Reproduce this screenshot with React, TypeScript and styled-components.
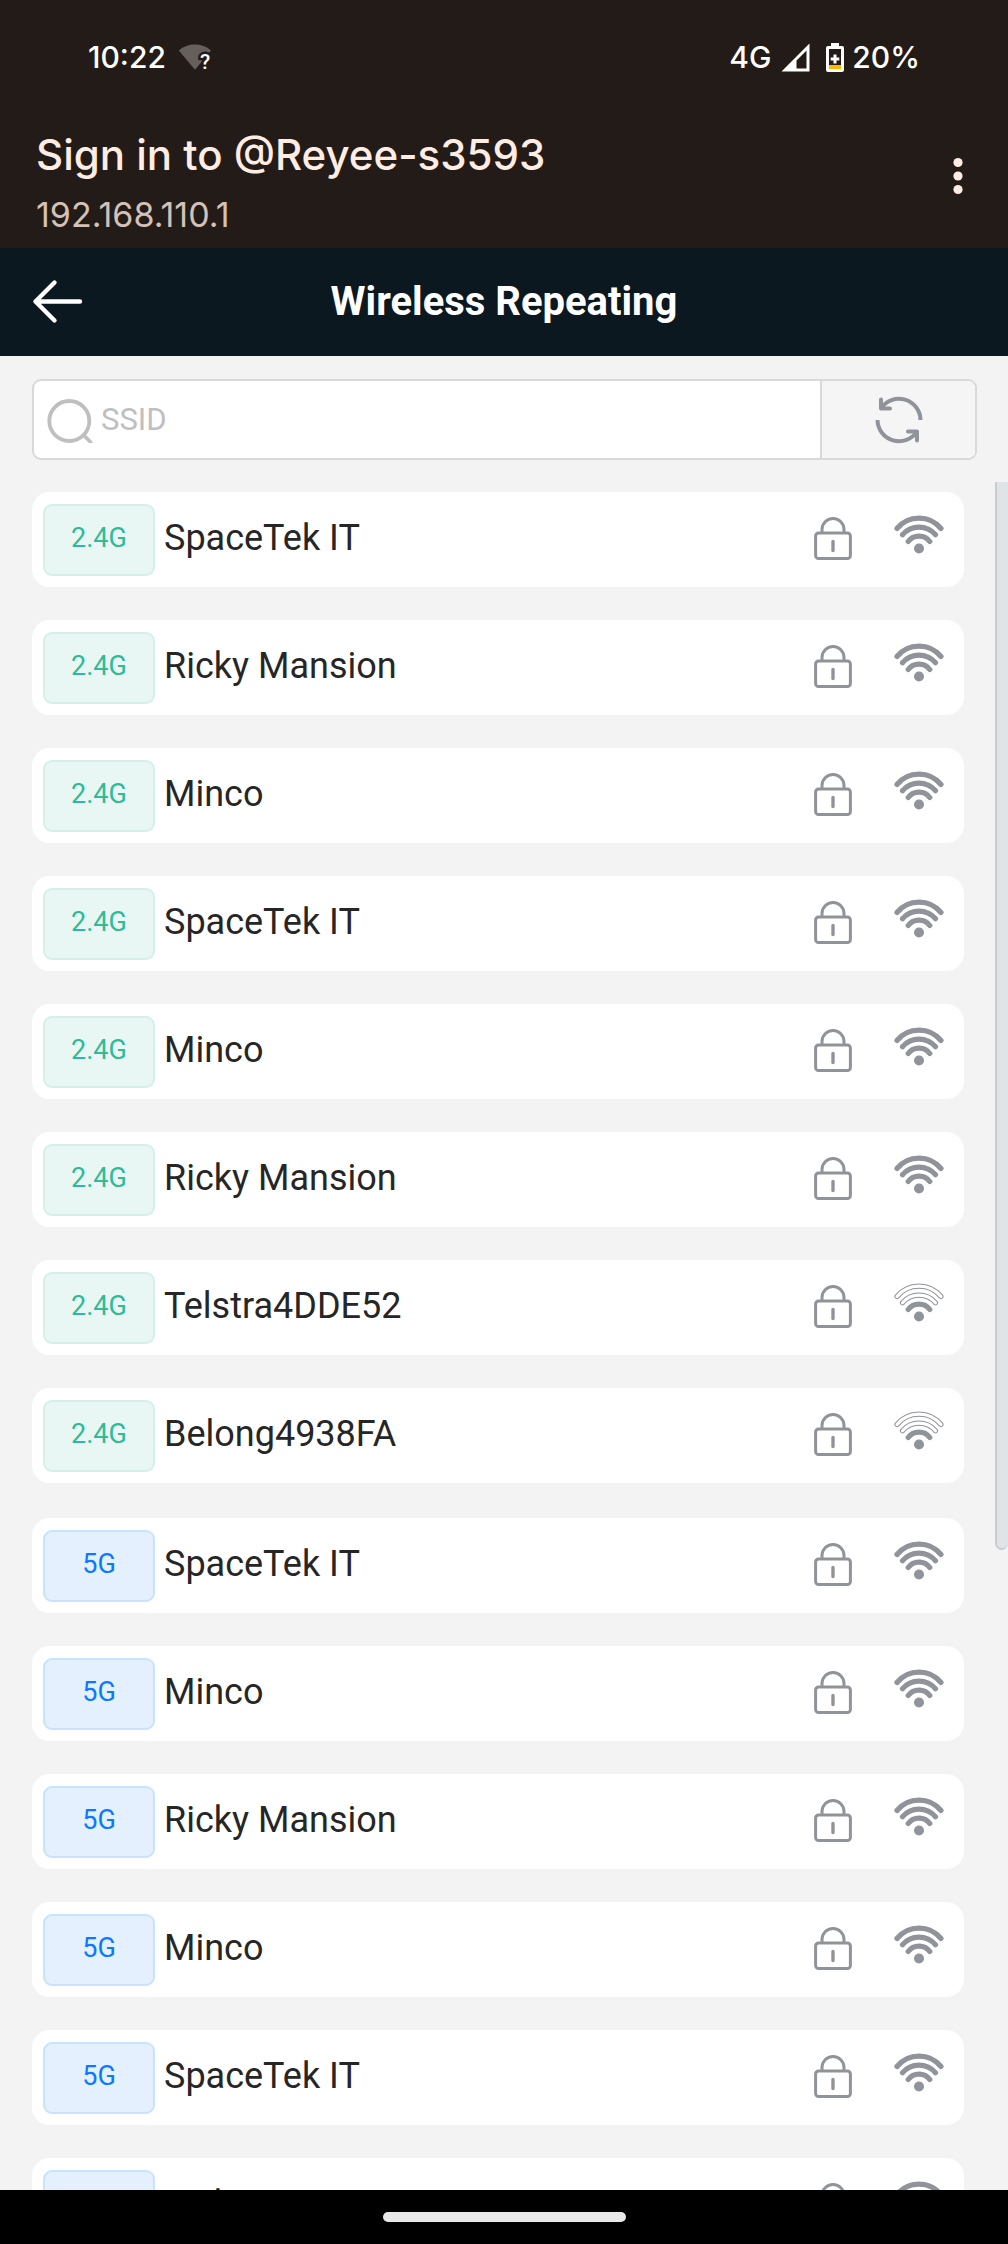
import React, { useState } from "react";
import styled, { createGlobalStyle } from "styled-components";

const GlobalStyle = createGlobalStyle`
  *, *::before, *::after { box-sizing: border-box; }
  body { margin: 0; background: #f3f3f3; }
`;

const systemFont = `Inter, "Open Sans", sans-serif`;
const pageFont = `Roboto, "Liberation Sans", sans-serif`;
const iconGrey = "#90939a";

const Screen = styled.div`
  display: flex;
  flex-direction: column;
  height: 100vh;
  background: #f3f3f3;
  font-family: ${pageFont};
`;

const StatusBar = styled.div`
  display: flex;
  flex: none;
  align-items: center;
  justify-content: space-between;
  height: 114px;
  padding: 0 88px;
  background: #231b17;
  color: #fff;
  font-family: ${systemFont};
  font-size: 30px;
  font-weight: 500;
  line-height: 40px;
`;

const StatusGroup = styled.div<{ $gap: number }>`
  display: flex;
  align-items: center;
  gap: ${(p) => p.$gap}px;
`;

const PortalBar = styled.header`
  display: flex;
  flex: none;
  align-items: flex-start;
  justify-content: space-between;
  height: 134px;
  padding: 11px 32px 0 36px;
  background: #231b17;
  font-family: ${systemFont};
`;

const PortalTitle = styled.div`
  color: #ffede4;
  font-size: 42px;
  font-weight: 500;
  line-height: 60px;
`;

const PortalAddress = styled.div`
  color: #d4c1b7;
  font-size: 34px;
  line-height: 60px;
`;

const IconButton = styled.button`
  display: flex;
  align-items: center;
  justify-content: center;
  padding: 0;
  border: 0;
  background: transparent;
  cursor: pointer;
`;

const MoreButton = styled(IconButton)`
  height: 102px;
`;

const NavBar = styled.div`
  display: grid;
  flex: none;
  grid-template-columns: 52px 1fr 52px;
  align-items: center;
  height: 108px;
  padding: 0 32px;
  background: #0b1820;
`;

const NavTitle = styled.h1`
  margin: 0;
  color: #fff;
  font-size: 40px;
  font-weight: 700;
  line-height: 48px;
  text-align: center;
`;

const SearchForm = styled.form`
  display: flex;
  flex: none;
  height: 81px;
  margin: 23px 31px 22px 32px;
  border: 2px solid #d9d9d9;
  border-radius: 9px;
  background: #fff;
  overflow: hidden;
`;

const SearchField = styled.label`
  display: flex;
  flex: 1;
  align-items: center;
  gap: 8px;
  min-width: 0;
  padding-left: 13px;
`;

const SearchInput = styled.input`
  flex: 1;
  min-width: 0;
  height: 100%;
  padding: 0;
  border: 0;
  outline: 0;
  background: transparent;
  color: #262626;
  font-family: ${pageFont};
  font-size: 31px;

  &::placeholder { color: #bfbfbf; opacity: 1; }
`;

const RefreshButton = styled(IconButton)`
  flex: none;
  width: 155px;
  border-left: 2px solid #d9d9d9;
  background: #f5f5f5;
`;

const ListArea = styled.main`
  display: flex;
  flex: 1;
  min-height: 0;
`;

const NetworkScroller = styled.div`
  display: flex;
  flex: 1;
  flex-direction: column;
  gap: 35px;
  min-width: 0;
  padding: 10px 31px 0 32px;
  overflow-y: auto;
  scrollbar-width: none;
`;

const NetworkList = styled.ul`
  display: flex;
  flex: none;
  flex-direction: column;
  gap: 33px;
  margin: 0;
  padding: 0;
  list-style: none;
`;

const NetworkRow = styled.button`
  display: flex;
  align-items: center;
  width: 100%;
  height: 95px;
  padding: 0 20px 0 11px;
  border: 0;
  border-radius: 18px;
  background: #fff;
  color: #262626;
  font-family: ${pageFont};
  text-align: left;
  cursor: pointer;
`;

const Band = styled.span<{ $fast: boolean }>`
  flex: none;
  width: 112px;
  height: 72px;
  border: 2px solid ${(p) => (p.$fast ? "#c9e2fd" : "#d4f0e8")};
  border-radius: 9px;
  background: ${(p) => (p.$fast ? "#e4f0fd" : "#e8f7f4")};
  color: ${(p) => (p.$fast ? "#0a7aff" : "#2fba98")};
  font-size: 27px;
  line-height: 64px;
  text-align: center;
`;

const NetworkName = styled.span`
  flex: 1;
  min-width: 0;
  padding: 0 9px 4px;
  overflow: hidden;
  font-size: 36px;
  line-height: 48px;
  text-overflow: ellipsis;
  white-space: nowrap;
`;

const RowIcons = styled.span`
  display: flex;
  flex: none;
  gap: 42px;
  padding-bottom: 4px;
`;

const ScrollTrack = styled.div`
  flex: none;
  width: 13px;
`;

const ScrollThumb = styled.div`
  height: 62.5%;
  border: 2px solid #c9cdd0;
  border-width: 0 0 2px 2px;
  border-radius: 0 0 7px 7px;
  background: #e0e4e8;
`;

const GestureBar = styled.footer`
  display: flex;
  flex: none;
  justify-content: center;
  height: 54px;
  padding-top: 22px;
  background: #000;
`;

const GestureHandle = styled.div`
  width: 243px;
  height: 10px;
  border-radius: 5px;
  background: #e9e9e9;
`;

const WifiUnknownIcon = () => (
  <svg width="40" height="28" viewBox="0 0 40 28" overflow="visible" aria-hidden="true">
    <path d="M.8 7.4A25 25 0 0 1 33 7.4L17 26.8Z" fill="#66605d" />
    <text
      x="27"
      y="26"
      textAnchor="middle"
      fontFamily="Roboto, sans-serif"
      fontSize="21"
      fontWeight="500"
      fill="#fff"
      stroke="#231b17"
      strokeWidth="5"
      paintOrder="stroke"
    >
      ?
    </text>
  </svg>
);

const SignalIcon = () => (
  <svg width="29" height="29" viewBox="0 0 29 29" aria-hidden="true">
    <path d="M28.5.5V28.5H.5ZM25.5 7.6 15.5 17.6V25.5H25.5Z" fill="#fff" fillRule="evenodd" />
  </svg>
);

const BatteryIcon = () => (
  <svg width="18" height="29" viewBox="0 0 18 29" aria-hidden="true">
    <path
      d="M5 0H13V3H16Q18 3 18 5V27Q18 29 16 29H2Q0 29 0 27V5Q0 3 2 3H5ZM3 6V26H15V6Z"
      fill="#fff"
      fillRule="evenodd"
    />
    <path d="M3 22H15V26H3Z" fill="#fcb900" />
    <path d="M9 11.5V20.5M4.7 16H13.3" stroke="#fff" strokeWidth="3" />
  </svg>
);

const MoreIcon = () => (
  <svg width="36" height="40" viewBox="0 0 36 40" fill="#ffede4" aria-hidden="true">
    <circle cx="18" cy="6.5" r="4.6" />
    <circle cx="18" cy="20" r="4.6" />
    <circle cx="18" cy="33.5" r="4.6" />
  </svg>
);

const BackIcon = () => (
  <svg width="52" height="46" viewBox="0 0 52 46" fill="none" stroke="#fff" strokeWidth="4.4" strokeLinecap="round" strokeLinejoin="round" aria-hidden="true">
    <path d="M22.5 3.5 3.5 22.5 22.5 41.5M3.5 22.5H48" />
  </svg>
);

const SearchIcon = () => (
  <svg width="46" height="46" viewBox="0 0 46 46" fill="none" stroke="#bfbfbf" strokeWidth="3.8" strokeLinecap="round" aria-hidden="true">
    <circle cx="22.3" cy="24" r="20" />
    <path d="M37.5 39 43.5 45" />
  </svg>
);

const RefreshIcon = () => (
  <svg width="48" height="48" viewBox="0 0 48 48" fill="none" stroke={iconGrey} strokeWidth="4" strokeLinejoin="round" aria-hidden="true">
    <path d="M45.5 24A21.5 21.5 0 0 0 6 12.5M2.5 24A21.5 21.5 0 0 0 42 35.5" />
    <path d="M6 3.5V12.5H15M42 44.5V35.5H33" strokeLinecap="round" />
  </svg>
);

const LockIcon = () => (
  <svg width="38" height="44" viewBox="0 0 38 44" fill="none" stroke={iconGrey} strokeWidth="3" aria-hidden="true">
    <rect x="1.6" y="17" width="34.8" height="25.5" rx="3" />
    <path d="M8 17V13.5A11 11 0 0 1 30 13.5V17" />
    <path d="M19 25.5V34.5" strokeLinecap="round" strokeWidth="3.4" />
  </svg>
);

const arcs = [
  "M3 12.5A28.4 28.4 0 0 1 47 12.5",
  "M8.5 18.7A21.6 21.6 0 0 1 41.5 18.7",
  "M14.2 25.5A13.5 13.5 0 0 1 35.8 25.5",
];

const WifiIcon = ({ weak }: { weak: boolean }) => (
  <svg width="50" height="44" viewBox="0 0 50 44" fill="none" strokeLinecap="round" overflow="visible" aria-hidden="true">
    {arcs.map((d, i) => (
      <g key={d}>
        <path d={d} stroke={iconGrey} strokeWidth="5.2" />
        {weak && i < 2 && <path d={d} stroke="#fff" strokeWidth="3.2" />}
      </g>
    ))}
    <circle cx="25" cy="32.5" r="5" fill={iconGrey} />
  </svg>
);

type Network = { name: string; weak?: boolean };

const bands: { label: string; networks: Network[] }[] = [
  {
    label: "2.4G",
    networks: [
      { name: "SpaceTek IT" },
      { name: "Ricky Mansion" },
      { name: "Minco" },
      { name: "SpaceTek IT" },
      { name: "Minco" },
      { name: "Ricky Mansion" },
      { name: "Telstra4DDE52", weak: true },
      { name: "Belong4938FA", weak: true },
    ],
  },
  {
    label: "5G",
    networks: [
      { name: "SpaceTek IT" },
      { name: "Minco" },
      { name: "Ricky Mansion" },
      { name: "Minco" },
      { name: "SpaceTek IT" },
      { name: "Ricky Mansion" },
    ],
  },
];

export default function App() {
  const [query, setQuery] = useState("");
  const matches = (n: Network) => n.name.toLowerCase().includes(query.toLowerCase());

  return (
    <Screen>
      <GlobalStyle />
      <StatusBar>
        <StatusGroup $gap={12}>
          <span>10:22</span>
          <WifiUnknownIcon />
        </StatusGroup>
        <StatusGroup $gap={16}>
          <StatusGroup $gap={10}>
            <span>4G</span>
            <SignalIcon />
          </StatusGroup>
          <StatusGroup $gap={8}>
            <BatteryIcon />
            <span>20%</span>
          </StatusGroup>
        </StatusGroup>
      </StatusBar>

      <PortalBar>
        <div>
          <PortalTitle>Sign in to @Reyee-s3593</PortalTitle>
          <PortalAddress>192.168.110.1</PortalAddress>
        </div>
        <MoreButton type="button" aria-label="More options">
          <MoreIcon />
        </MoreButton>
      </PortalBar>

      <NavBar>
        <IconButton type="button" aria-label="Back">
          <BackIcon />
        </IconButton>
        <NavTitle>Wireless Repeating</NavTitle>
      </NavBar>

      <SearchForm onSubmit={(e) => e.preventDefault()}>
        <SearchField>
          <SearchIcon />
          <SearchInput
            aria-label="SSID"
            placeholder="SSID"
            value={query}
            onChange={(e) => setQuery(e.target.value)}
          />
        </SearchField>
        <RefreshButton type="button" aria-label="Refresh" onClick={() => setQuery("")}>
          <RefreshIcon />
        </RefreshButton>
      </SearchForm>

      <ListArea>
        <NetworkScroller>
          {bands.map((band) => (
            <NetworkList key={band.label}>
              {band.networks.filter(matches).map((network, i) => (
                <li key={i}>
                  <NetworkRow type="button">
                    <Band $fast={band.label === "5G"}>{band.label}</Band>
                    <NetworkName>{network.name}</NetworkName>
                    <RowIcons>
                      <LockIcon />
                      <WifiIcon weak={!!network.weak} />
                    </RowIcons>
                  </NetworkRow>
                </li>
              ))}
            </NetworkList>
          ))}
        </NetworkScroller>
        <ScrollTrack>
          <ScrollThumb />
        </ScrollTrack>
      </ListArea>

      <GestureBar>
        <GestureHandle />
      </GestureBar>
    </Screen>
  );
}
